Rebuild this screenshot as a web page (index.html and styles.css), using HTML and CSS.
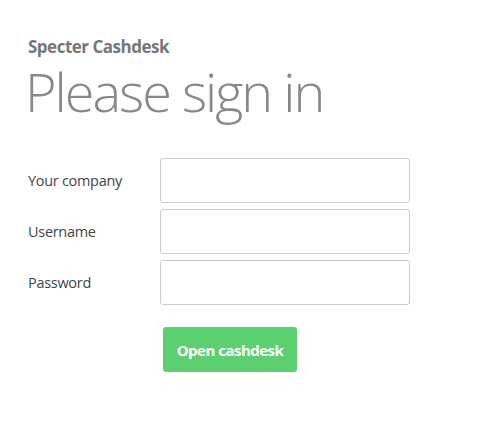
FILE: index.html
```html
<!DOCTYPE html>
<html>
<head>
<meta charset="utf-8">
<link rel="stylesheet" href="styles.css">
</head>
<body>
<div class="page">
  <div class="brand">Specter Cashdesk</div>
  <h1 class="title">Please sign in</h1>
  <form class="form">
    <div class="row"><label class="label">Your company</label><input class="input" type="text"></div>
    <div class="row"><label class="label">Username</label><input class="input" type="text"></div>
    <div class="row"><label class="label">Password</label><input class="input" type="password"></div>
    <div class="actions"><button class="btn" type="button">Open cashdesk</button></div>
  </form>
</div>
</body>
</html>
```
FILE: styles.css
```css
html, body { margin: 0; padding: 0; background: #fff; }
body { font-family: "Open Sans", "Lato", sans-serif; color: #444; }
.page { padding: 36px 0 0 28px; }
.brand { font-size: 17px; font-weight: 700; color: #777; letter-spacing: -0.5px; line-height: 22px; }
.title { margin: 6px 0 0 -3px; font-weight: 300; font-size: 54px; color: #888; letter-spacing: -2px; line-height: 54px; }
.form { margin-top: 40px; display: flex; flex-direction: column; gap: 6px; }
.row { display: flex; align-items: center; }
.label { width: 132px; font-size: 14.5px; color: #444; letter-spacing: -0.3px; }
.input { box-sizing: border-box; width: 250px; height: 45px; border: 1px solid #ccc; border-radius: 3px; margin: 0; padding: 0 10px; font: inherit; }
.actions { padding-left: 135px; margin-top: 16px; }
.btn { box-sizing: border-box; width: 134px; height: 45px; border: 0; border-radius: 3px; background: #5cd070; color: #fff; font-family: inherit; font-size: 15px; font-weight: 700; letter-spacing: -0.5px; }
```
